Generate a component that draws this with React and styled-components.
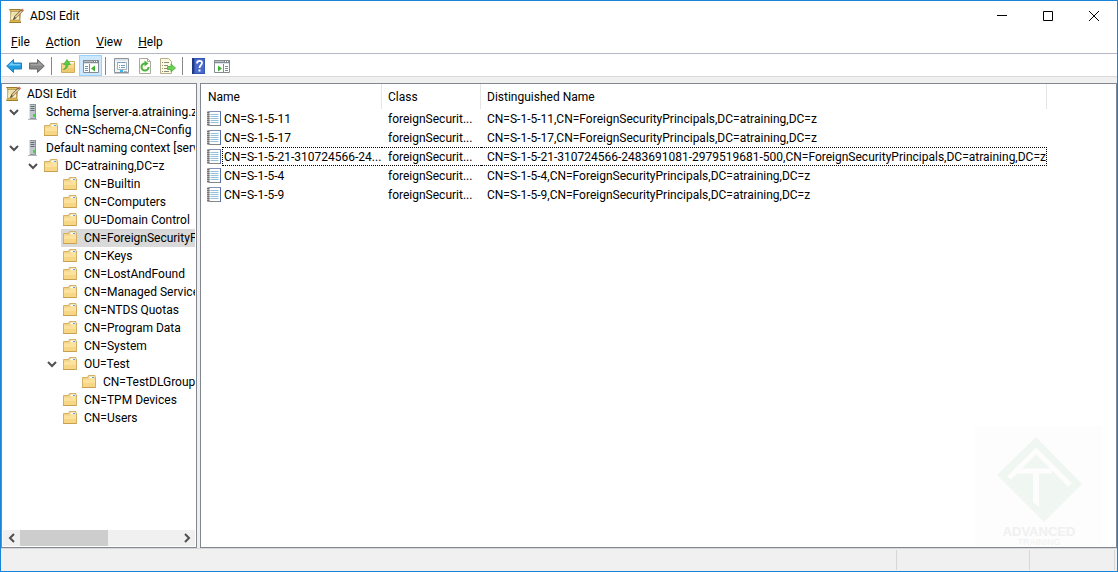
import React, { useState } from 'react';
import styled, { createGlobalStyle } from 'styled-components';

const GlobalStyle = createGlobalStyle`
  * {
    box-sizing: border-box;
  }

  body {
    margin: 0;
    background: #fff;
    color: #000;
    font-family: Roboto, 'Open Sans', sans-serif;
    font-size: 12px;
    line-height: 18px;
  }

  button {
    margin: 0;
    padding: 0;
    border: 0;
    background: none;
    color: inherit;
    font: inherit;
  }

  svg {
    display: block;
    flex: none;
  }
`;

const Window = styled.div`
  display: flex;
  flex-direction: column;
  min-height: 100vh;
  border: 1px solid #1883d7;
  background: #f0f0f0;
`;

const TitleBar = styled.header`
  display: flex;
  align-items: center;
  height: 30px;
  padding-left: 7px;
  background: #fff;
`;

const Title = styled.h1`
  flex: 1;
  margin: 0 0 0 6px;
  font-size: 12px;
  font-weight: 400;
`;

const CaptionButton = styled.button`
  display: flex;
  align-items: center;
  justify-content: center;
  width: 46px;
  height: 30px;

  &:hover {
    background: ${({ $danger }) => ($danger ? '#e81123' : '#e5e5e5')};
  }
`;

const MenuBar = styled.nav`
  display: flex;
  height: 23px;
  padding-left: 2px;
  background: #fff;
  border-bottom: 1px solid #b4b8c4;
`;

const MenuButton = styled.button`
  padding: 0 8px;

  &:hover {
    background: #e5f3ff;
  }
`;

const Toolbar = styled.div`
  display: flex;
  height: 23px;
  padding: 1px 0 0 1px;
  background: #fff;
  border-bottom: 1px solid #dadada;
`;

const ToolButton = styled.button`
  display: flex;
  align-items: center;
  justify-content: center;
  width: 23px;
  height: 21px;
  padding: 1px 0 0 1px;
  border: 1px solid ${({ $active }) => ($active ? '#99d1ff' : 'transparent')};
  background: ${({ $active }) => ($active ? '#cce8ff' : 'transparent')};

  &:hover {
    background: #e5f3ff;
  }
`;

const ToolSeparator = styled.span`
  width: 1px;
  height: 18px;
  margin: 2px 4px 1px 3px;
  background: #868686;
`;

const Panes = styled.main`
  flex: 1;
  display: flex;
  gap: 3px;
  padding-top: 6px;
`;

const Pane = styled.section`
  border: 1px solid #828790;
  background: #fff;
`;

const TreePane = styled(Pane)`
  display: flex;
  flex-direction: column;
  justify-content: space-between;
  width: 196px;
  padding: 1px;
`;

const ListPane = styled(Pane)`
  position: relative;
  flex: 1;
  min-width: 0;
  overflow: hidden;
`;

const Tree = styled.ul`
  margin: 0;
  padding: 0;
  overflow: hidden;
  list-style: none;
`;

const TreeRow = styled.li`
  display: flex;
  height: 18px;
  padding-left: ${({ $level }) => ($level > 0 ? $level * 19 - 17 : 1)}px;
  white-space: nowrap;
`;

const Expander = styled.button`
  display: flex;
  flex: none;
  align-items: center;
  justify-content: center;
  width: 18px;
`;

const ExpanderSpace = styled.span`
  flex: none;
  width: 18px;
`;

const NodeButton = styled.button`
  display: flex;
  flex: 1;
  align-items: center;
  gap: 6px;
  padding-left: 1px;
  background: ${({ $selected }) => ($selected ? '#d9d9d9' : 'transparent')};
  text-align: left;
`;

const ScrollBar = styled.div`
  display: flex;
  height: 16px;
  background: #f0f0f0;
`;

const ScrollButton = styled.button`
  display: flex;
  align-items: center;
  justify-content: center;
  width: 17px;
`;

const ScrollTrack = styled.div`
  flex: 1;
`;

const ScrollThumb = styled.div`
  width: 56%;
  height: 100%;
  background: #cdcdcd;
`;

const Table = styled.table`
  width: 846px;
  border-collapse: separate;
  border-spacing: 0;
  table-layout: fixed;
`;

const HeadCell = styled.th`
  height: 25px;
  padding: 1px 6px 0 ${({ $first }) => ($first ? 7 : 6)}px;
  border-right: 1px solid #e5e5e5;
  font-weight: 400;
  text-align: left;
`;

const Cell = styled.td`
  padding: 0;
`;

const NameCell = styled.div`
  display: flex;
  align-items: center;
  padding-left: 5px;

  svg {
    margin-top: 1px;
  }
`;

const CellText = styled.div`
  flex: 1;
  height: 19px;
  padding: 1px 0 0 ${({ $name }) => ($name ? 1 : 6)}px;
  border: 0 dotted ${({ $focused }) => ($focused ? '#000' : 'transparent')};
  border-width: 1px ${({ $last }) => ($last ? 1 : 0)}px 1px ${({ $name }) => ($name ? 1 : 0)}px;
  line-height: 16px;
  white-space: nowrap;
`;

const StatusBar = styled.footer`
  display: flex;
  justify-content: flex-end;
  height: 23px;
  padding: 1px 2px 1px 0;
  border-top: 1px solid #d7d7d7;
`;

const StatusPart = styled.div`
  width: ${({ $width }) => $width}px;
  border-left: 1px solid #d7d7d7;
`;

const Watermark = styled.div`
  position: absolute;
  right: 13px;
  bottom: 0;
  width: 128px;
  height: 121px;
  background: #fdfdfd;
  color: #f0f0f0;
  font-family: 'Liberation Sans', Arial, sans-serif;
  text-align: center;
  pointer-events: none;

  svg {
    margin: 11px 0 0 22px;
  }
`;

const BrandName = styled.div`
  padding-top: 2px;
  font-size: 13px;
  font-weight: 700;
  line-height: 13px;
`;

const BrandLine = styled.div`
  font-size: 9px;
  line-height: 9px;
`;

const Svg = ({ size = 16, children }) => (
  <svg width={size} height={size} viewBox={`0 0 ${size} ${size}`} fill="none" aria-hidden="true">
    {children}
  </svg>
);

const EditIcon = () => (
  <Svg>
    <g transform="translate(1 0) scale(.94)">
      <path d="M0 1h12.500v3.500L12 13l1 3H0l1.500-3.500V4z" fill="#9c7b2c" />
      <path d="M1 2h10.500v1.500H2z" fill="#d9bd68" />
      <path d="M2.500 4h8.500v8.500H2z" fill="#f8efc0" />
      <path d="M1.500 13H11.500l.5 2H1z" fill="#dcb84f" />
      <path d="M4 5.500h5M3.500 7.500h4" stroke="#ddd09a" />
      <path d="M4.500 12.500l1-3.500L13 1.500l2 2L7.500 11z" fill="#6b5a44" />
      <path d="M6.200 9.300L12.700 2.800l1.200 1.200L7.400 10.500z" fill="#f0cf9a" />
      <path d="M12.700 1.800L14 .5 16 2.500l-1.300 1.300z" fill="#d9705f" />
      <path d="M4.500 12.500l.5-1.800 1.300 1.200z" fill="#333" />
    </g>
  </Svg>
);

const FolderIcon = () => (
  <Svg>
    <path d="M1.500 3.500h5l1-2h6.500v12h-12.500z" fill="#f1d389" stroke="#d3b066" />
    <path d="M8.500 2.500h5v2h-5z" fill="#fff" />
    <path d="M11 3.500h2" stroke="#57a3dd" />
    <path d="M2 5.500h6l1-1h5V13H2z" fill="#fce29d" />
    <path d="M2 9h12v4H2z" fill="#f7d685" />
    <path d="M1 13.500h13.500" stroke="#c9a14e" />
    <path d="M14.500 3v11" stroke="#d3b066" />
  </Svg>
);

const ServerIcon = () => (
  <Svg>
    <path d="M5 0h7v15H5z" fill="#8d959c" />
    <path d="M6 1h5v13H6z" fill="#bfc6cb" />
    <path d="M5 0h1v15H5z" fill="#dde1e4" />
    <path d="M6.500 2.500h4M6.500 4.500h4M6.500 6.500h4" stroke="#636c75" />
    <path d="M9 10h2v3H9z" fill="#4fd04a" />
    <path d="M4 15.500h9" stroke="#b6babd" />
  </Svg>
);

const RecordIcon = () => (
  <Svg>
    <path d="M2 .5h12.500v14H2z" fill="#fff" stroke="#9aa0b0" />
    <path d="M14.500 0v15" stroke="#5870b0" />
    <path d="M2 .5h12.500" stroke="#8391b8" />
    <path d="M2 14.500h12" stroke="#858585" />
    <path d="M4.500 3.500h8M4.500 5.500h8M4.500 7.500h8M4.500 9.500h8M4.500 11.500h8" stroke="#93c0da" />
    <path d="M2.500 0v15" stroke="#a2a2a2" strokeWidth="2" />
    <path d="M1 1.500h2.500M1 3.500h2.500M1 5.500h2.500M1 7.500h2.500M1 9.500h2.500M1 11.500h2.500M1 13.500h2.500" stroke="#737373" />
  </Svg>
);

const ArrowIcon = ({ forward }) => (
  <Svg>
    <g transform={forward ? 'translate(16 0) scale(-1 1)' : undefined}>
      <path
        d="M.7 8L7.500 1.500V5h8v6h-8v3.500z"
        fill={forward ? '#868686' : '#1f9ce0'}
        stroke={forward ? '#6c6c6c' : '#2580b8'}
      />
      <path d="M2.500 7.500l4-4V6h8v1.500z" fill={forward ? '#a3a3a3' : '#74cdf7'} />
    </g>
  </Svg>
);

const UpFolderIcon = () => (
  <Svg>
    <path d="M1.500 5.500h6l1-2h6v11h-13z" fill="#f5d98c" stroke="#d0ac5c" />
    <path d="M10 4h4v1.500h-4z" fill="#fff" />
    <path d="M2 10h12v4H2z" fill="#edc970" />
    <path
      d="M3.500 11.500c3.500-.5 4.500-2.500 4.500-5h2.500L7 1.500 3.500 6.500H6c0 2-.5 3.500-2.500 5z"
      fill="#5ccb45"
      stroke="#3a9f30"
      strokeWidth=".6"
    />
  </Svg>
);

const PanelIcon = ({ flip }) => (
  <Svg>
    <path d="M.5 2.500h15v12H.5z" fill="#fff" stroke="#858b93" />
    <path d="M0 2h16v4H0z" fill="#858b93" />
    <path d="M1 3.500h9" stroke="#b9bfc7" />
    <path d="M1 5.500h14" stroke="#dfe3e8" />
    <path d="M11 3.500h1M13 3.500h1" stroke="#fff" />
    {flip ? (
      <>
        <path d="M9.500 6v9" stroke="#858b93" />
        <path d="M11 8.500h3M11 10.500h3M11 12.500h3" stroke="#6f8eac" />
        <path d="M4 7.500l4 3-4 3z" fill="#3eb22f" />
      </>
    ) : (
      <>
        <path d="M6.500 6v9" stroke="#858b93" />
        <path d="M2 8.500h3M2 10.500h3M2 12.500h3" stroke="#6f8eac" />
        <path d="M12 7.500l-4 3 4 3z" fill="#3eb22f" />
      </>
    )}
  </Svg>
);

const PropertiesIcon = () => (
  <Svg>
    <path d="M.5 .5h14v14H.5z" fill="#f3f5f7" stroke="#8d949c" />
    <path d="M1 1h13v1.500H1z" fill="#d9dee3" />
    <path d="M3.500 4.500h9v7h-9z" fill="#fff" stroke="#a3b0bd" />
    <path d="M3.500 4.500h3M8 4.500h3M5 7.500h1M7 7.500h4M5 9.500h1M7 9.500h4" stroke="#6c9cc8" />
    <path d="M6 13h3" stroke="#39b7e8" strokeWidth="2" />
    <path d="M10 13.500h3" stroke="#a6adb4" />
    <path d="M0 15.500h15" stroke="#c5c9cd" />
  </Svg>
);

const RefreshIcon = () => (
  <Svg>
    <path d="M2.500 .5h8l3 3v12h-11z" fill="#fffef5" stroke="#a9a9a2" />
    <path d="M10.500 .5v3h3" stroke="#a9a9a2" />
    <path d="M8 5.500a3.500 3.500 0 1 0 3.500 3.500" stroke="#4ab53d" strokeWidth="2" />
    <path d="M7.500 2.500l4 3-4 3z" fill="#4ab53d" />
  </Svg>
);

const ExportIcon = () => (
  <Svg>
    <path d="M.5 .5h8l3 3v12H.5z" fill="#fffbe1" stroke="#b5ad8d" />
    <path d="M2 4.500h1M4 4.500h5M2 7.500h1M4 7.500h4M2 10.500h1M4 10.500h4M2 13.500h1M4 13.500h5" stroke="#8b8b80" />
    <path d="M7.500 8.500h3.500V6l4.500 4-4.500 4v-2.500H7.500z" fill="#6dd253" stroke="#46a83a" strokeWidth=".8" />
  </Svg>
);

const HelpIcon = () => (
  <Svg>
    <path d="M1 0h13v16H1z" fill="#3556b3" />
    <path d="M1 0h2v16H1z" fill="#22387f" />
    <path d="M4 1h9v14H4z" fill="#4868ca" />
    <path d="M6 5.500C6 2 11 2 11 5c0 2-2.500 2.500-2.500 5" stroke="#fff" strokeWidth="1.800" />
    <path d="M7.500 11.500h2v2h-2z" fill="#fff" />
  </Svg>
);

const Chevron = ({ d }) => (
  <Svg size={10}>
    <path d={d} stroke="#505050" strokeWidth="2" />
  </Svg>
);

const nodeIcons = { edit: EditIcon, server: ServerIcon, folder: FolderIcon };

const nodes = [
  { label: 'ADSI Edit', level: 0, icon: 'edit' },
  { label: 'Schema [server-a.atraining.z', level: 1, icon: 'server', open: true },
  { label: 'CN=Schema,CN=Config', level: 2 },
  { label: 'Default naming context [serv', level: 1, icon: 'server', open: true },
  { label: 'DC=atraining,DC=z', level: 2, open: true },
  { label: 'CN=Builtin', level: 3 },
  { label: 'CN=Computers', level: 3 },
  { label: 'OU=Domain Control', level: 3 },
  { label: 'CN=ForeignSecurityP', level: 3 },
  { label: 'CN=Keys', level: 3 },
  { label: 'CN=LostAndFound', level: 3 },
  { label: 'CN=Managed Service', level: 3 },
  { label: 'CN=NTDS Quotas', level: 3 },
  { label: 'CN=Program Data', level: 3 },
  { label: 'CN=System', level: 3 },
  { label: 'OU=Test', level: 3, open: true },
  { label: 'CN=TestDLGroup', level: 4 },
  { label: 'CN=TPM Devices', level: 3 },
  { label: 'CN=Users', level: 3 },
];

const principals = [
  { name: 'CN=S-1-5-11', sid: 'S-1-5-11' },
  { name: 'CN=S-1-5-17', sid: 'S-1-5-17' },
  { name: 'CN=S-1-5-21-310724566-24...', sid: 'S-1-5-21-310724566-2483691081-2979519681-500' },
  { name: 'CN=S-1-5-4', sid: 'S-1-5-4' },
  { name: 'CN=S-1-5-9', sid: 'S-1-5-9' },
];

const TreeNode = ({ node, selected, onSelect }) => {
  const Icon = nodeIcons[node.icon || 'folder'];

  return (
    <TreeRow $level={node.level}>
      {node.open && (
        <Expander aria-label={`Collapse ${node.label}`}>
          <Chevron d="M1 3l4 4 4-4" />
        </Expander>
      )}
      {!node.open && node.level > 0 && <ExpanderSpace />}
      <NodeButton $selected={selected} onClick={() => onSelect(node.label)}>
        <Icon />
        {node.label}
      </NodeButton>
    </TreeRow>
  );
};

const App = () => {
  const [selected, setSelected] = useState('CN=ForeignSecurityP');
  const [focused, setFocused] = useState(principals[2].sid);

  return (
    <>
      <GlobalStyle />
      <Window>
        <TitleBar>
          <EditIcon />
          <Title>ADSI Edit</Title>
          <CaptionButton aria-label="Minimize">
            <Svg size={10}>
              <path d="M0 4.500h10" stroke="#000" />
            </Svg>
          </CaptionButton>
          <CaptionButton aria-label="Maximize">
            <Svg size={10}>
              <path d="M.5 .5h9v9h-9z" stroke="#000" />
            </Svg>
          </CaptionButton>
          <CaptionButton aria-label="Close" $danger>
            <Svg size={10}>
              <path d="M0 0l10 10M10 0L0 10" stroke="#000" />
            </Svg>
          </CaptionButton>
        </TitleBar>

        <MenuBar>
          {['File', 'Action', 'View', 'Help'].map((name) => (
            <MenuButton key={name}>
              <u>{name[0]}</u>
              {name.slice(1)}
            </MenuButton>
          ))}
        </MenuBar>

        <Toolbar>
          <ToolButton aria-label="Back"><ArrowIcon /></ToolButton>
          <ToolButton aria-label="Forward"><ArrowIcon forward /></ToolButton>
          <ToolSeparator />
          <ToolButton aria-label="Up one level"><UpFolderIcon /></ToolButton>
          <ToolButton aria-label="Show or hide console tree" $active><PanelIcon /></ToolButton>
          <ToolSeparator />
          <ToolButton aria-label="Properties"><PropertiesIcon /></ToolButton>
          <ToolButton aria-label="Refresh"><RefreshIcon /></ToolButton>
          <ToolButton aria-label="Export list"><ExportIcon /></ToolButton>
          <ToolSeparator />
          <ToolButton aria-label="Help topics"><HelpIcon /></ToolButton>
          <ToolButton aria-label="Show or hide action pane"><PanelIcon flip /></ToolButton>
        </Toolbar>

        <Panes>
          <TreePane>
            <Tree>
              {nodes.map((node) => (
                <TreeNode
                  key={node.label}
                  node={node}
                  selected={node.label === selected}
                  onSelect={setSelected}
                />
              ))}
            </Tree>
            <ScrollBar>
              <ScrollButton aria-label="Scroll left"><Chevron d="M7 1L3 5l4 4" /></ScrollButton>
              <ScrollTrack>
                <ScrollThumb />
              </ScrollTrack>
              <ScrollButton aria-label="Scroll right"><Chevron d="M3 1l4 4-4 4" /></ScrollButton>
            </ScrollBar>
          </TreePane>

          <ListPane>
            <Table>
              <colgroup>
                <col width="181" />
                <col width="99" />
                <col width="566" />
              </colgroup>
              <thead>
                <tr>
                  <HeadCell $first>Name</HeadCell>
                  <HeadCell>Class</HeadCell>
                  <HeadCell>Distinguished Name</HeadCell>
                </tr>
              </thead>
              <tbody>
                {principals.map(({ name, sid }) => (
                  <tr key={sid} onClick={() => setFocused(sid)}>
                    <Cell>
                      <NameCell>
                        <RecordIcon />
                        <CellText $name $focused={sid === focused}>{name}</CellText>
                      </NameCell>
                    </Cell>
                    <Cell>
                      <CellText $focused={sid === focused}>foreignSecurit...</CellText>
                    </Cell>
                    <Cell>
                      <CellText $last $focused={sid === focused}>
                        {`CN=${sid},CN=ForeignSecurityPrincipals,DC=atraining,DC=z`}
                      </CellText>
                    </Cell>
                  </tr>
                ))}
              </tbody>
            </Table>

            <Watermark>
              <svg width="86" height="86" viewBox="0 0 86 86" aria-hidden="true">
                <path d="M39 0l46 47-38 38L0 38z" fill="#f0f6f2" />
                <path d="M12 41l27-27 34 34" fill="none" stroke="#fdfdfd" strokeWidth="5" />
                <path d="M17 34h38" stroke="#fdfdfd" strokeWidth="5" />
                <path d="M36 34h6v36l-6-5z" fill="#fdfdfd" />
              </svg>
              <BrandName>ADVANCED</BrandName>
              <BrandLine>TRAINING</BrandLine>
            </Watermark>
          </ListPane>
        </Panes>

        <StatusBar>
          <StatusPart $width={133} />
          <StatusPart $width={85} />
          <StatusPart $width={1} />
        </StatusBar>
      </Window>
    </>
  );
};

export default App;
